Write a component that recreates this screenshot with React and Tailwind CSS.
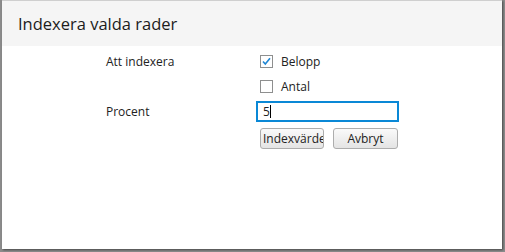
export default function App() {
  const font = { fontFamily: '"Open Sans", "Noto Sans", sans-serif' };
  return (
    <div className="w-[505px] h-[252px] bg-[#8c8c8c] overflow-hidden flex" style={font}>
      <div className="ml-[2px] w-[500px] h-[249px] bg-white flex flex-col shadow-[1px_1px_2px_rgba(0,0,0,0.5)]">
        <div className="h-[46px] bg-[#f5f5f5] border-t border-[#cfcfcf] flex items-center pl-[16px]">
          <span className="text-[16.5px] text-[#1c1c1c] leading-none pt-[1px]">Indexera valda rader</span>
        </div>
        <div className="flex pl-[104px] pt-[3px] text-[12px] text-[#222]">
          <div className="w-[150px] flex flex-col">
            <div className="h-[25px] flex items-center">Att indexera</div>
            <div className="h-[27px]"></div>
            <div className="h-[21px] flex items-center">Procent</div>
          </div>
          <div className="flex flex-col">
            <div className="h-[25px] flex items-center pl-[4px] gap-[8px]">
              <div className="w-[13px] h-[13px] border border-[#8e8f8f] bg-white flex items-center justify-center">
                <svg width="11" height="11" viewBox="0 0 11 11">
                  <path d="M2 5.5 L4.3 8 L9 2.3" fill="none" stroke="#1f86d4" strokeWidth="1.6" />
                </svg>
              </div>
              <span>Belopp</span>
            </div>
            <div className="h-[27px] flex items-center pb-[2px] pl-[4px] gap-[8px]">
              <div className="w-[13px] h-[13px] border border-[#8e8f8f] bg-white"></div>
              <span>Antal</span>
            </div>
            <div className="w-[143px] h-[21px] border-2 border-[#0a88d6] flex items-center pl-[5px]">
              <span className="leading-none">5</span>
              <span className="w-[1px] h-[13px] bg-black"></span>
            </div>
            <div className="flex gap-[9px] pl-[4px] pt-[6px]">
              <div className="w-[64px] h-[21px] border border-[#adadad] rounded-[3px] bg-gradient-to-b from-[#fafafa] to-[#e4e4e4] flex items-center pl-[2px] overflow-hidden whitespace-nowrap">
                Indexvärde
              </div>
              <div className="w-[65px] h-[21px] border border-[#adadad] rounded-[3px] bg-gradient-to-b from-[#fafafa] to-[#e4e4e4] flex items-center justify-center">
                Avbryt
              </div>
            </div>
          </div>
        </div>
      </div>
    </div>
  );
}
